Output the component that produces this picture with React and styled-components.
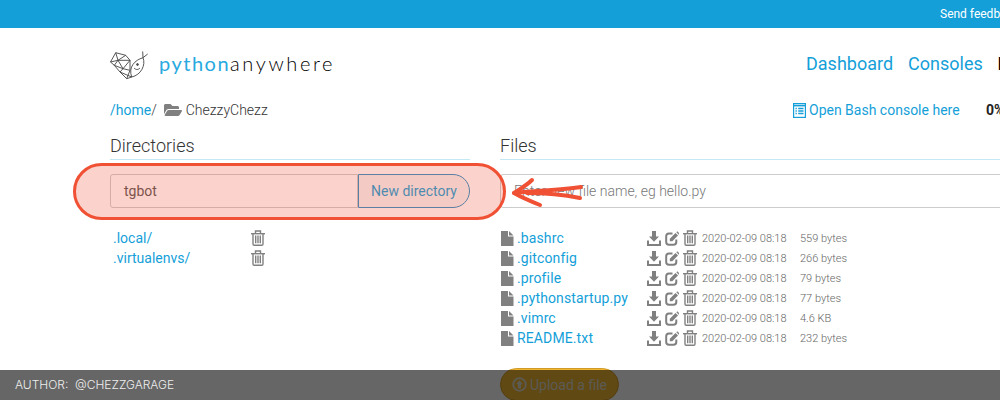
import styled, { createGlobalStyle } from "styled-components";
import { FaFolderOpen } from "react-icons/fa";

const blue = "#149fd9";
const grey = "#808080";

const GlobalStyle = createGlobalStyle`
  html, body {
    margin: 0;
    padding: 0;
    background: #fff;
    overflow: hidden;
  }
  body {
    font-family: Roboto, "Liberation Sans", sans-serif;
    font-weight: 300;
    color: #333;
  }
`;

const Page = styled.div`
  position: relative;
  width: 1000px;
  height: 400px;
  overflow: hidden;
`;

const TopBar = styled.div`
  height: 28px;
  background: ${blue};
  color: #fff;
  font-size: 12px;
  font-weight: 400;
  line-height: 29px;
  padding-left: 940px;
  white-space: nowrap;
`;

const Container = styled.div`
  width: 1300px;
  margin-left: 110px;
`;

const Header = styled.header`
  display: flex;
  align-items: center;
  height: 70px;
`;

const LogoArea = styled.div`
  display: flex;
  align-items: center;
  width: 696px;
  gap: 9px;
  svg {
    margin-top: 6px;
  }
`;

const LogoText = styled.div`
  font-family: Lato, sans-serif;
  font-size: 20px;
  font-weight: 300;
  letter-spacing: 2.6px;
  color: #000;
  span {
    font-weight: 400;
    letter-spacing: 1.5px;
    color: #29a9e0;
  }
`;

const Nav = styled.nav`
  display: flex;
  gap: 15px;
  font-size: 18px;
  font-weight: 400;
  white-space: nowrap;
  a {
    color: ${blue};
  }
  b {
    color: #000;
    font-weight: 700;
  }
`;

const InfoRow = styled.div`
  display: flex;
  align-items: center;
  height: 24px;
  margin-bottom: 12px;
  font-size: 14px;
  white-space: nowrap;
`;

const Crumbs = styled.div`
  display: flex;
  align-items: center;
  width: 683px;
  a {
    color: ${blue};
    font-weight: 400;
  }
  svg {
    color: ${grey};
    font-size: 18px;
    margin: 0 4px 0 7px;
  }
`;

const BashLink = styled.a`
  display: flex;
  align-items: center;
  gap: 3px;
  width: 193px;
  color: ${blue};
  font-weight: 400;
`;

const Percent = styled.b`
  font-weight: 700;
  color: #222;
`;

const Columns = styled.div`
  display: grid;
  grid-template-columns: 360px 1fr;
  column-gap: 30px;
`;

const Heading = styled.h2`
  margin: 0 0 14px;
  padding-bottom: 1px;
  border-bottom: 1px solid #c5e8f5;
  font-size: 18px;
  line-height: 24px;
  font-weight: 300;
  color: #333;
`;

const InputRow = styled.div`
  display: flex;
  height: 34px;
  margin-bottom: 20px;
`;

const TextInput = styled.div`
  flex: 1;
  box-sizing: border-box;
  padding-left: 13px;
  border: 1px solid #ccc;
  border-radius: 3px 0 0 3px;
  font-size: 14px;
  line-height: 32px;
  font-weight: ${(p) => (p.$placeholder ? 300 : 400)};
  color: ${(p) => (p.$placeholder ? "#777" : "#555")};
  white-space: nowrap;
`;

const DirButton = styled.div`
  box-sizing: border-box;
  width: 112px;
  border: 1px solid #2a90c8;
  border-radius: 0 17px 17px 0;
  background: #f5f5f5;
  color: ${blue};
  font-size: 14px;
  font-weight: 400;
  line-height: 32px;
  text-align: center;
`;

const DirRow = styled.div`
  display: grid;
  grid-template-columns: 138px 14px;
  align-items: center;
  height: 20px;
  padding-left: 3px;
  font-size: 14px;
  a {
    color: ${blue};
    font-weight: 400;
  }
`;

const FileRow = styled.div`
  display: grid;
  grid-template-columns: 17px 130px 55px 98px 80px;
  align-items: center;
  height: 20px;
  font-size: 14px;
  white-space: nowrap;
  a {
    color: ${blue};
    font-weight: 400;
    letter-spacing: 0.12px;
  }
  > svg {
    margin-left: 1px;
  }
`;

const Actions = styled.div`
  display: flex;
  align-items: center;
  gap: 4px;
`;

const Meta = styled.span`
  font-size: 11px;
  color: #666;
`;

const UploadButton = styled.div`
  display: flex;
  align-items: center;
  justify-content: center;
  gap: 3px;
  box-sizing: border-box;
  width: 119px;
  height: 33px;
  margin-top: 20px;
  border: 1px solid #d09a28;
  border-radius: 17px;
  background: #f2b632;
  color: #e4e0d0;
  font-size: 14px;
  font-weight: 400;
`;

const Highlight = styled.div`
  position: absolute;
  left: 73px;
  top: 163px;
  box-sizing: border-box;
  width: 433px;
  height: 57px;
  border: 3px solid #f05033;
  border-radius: 29px;
  background: rgba(240, 80, 51, 0.25);
`;

const Arrow = styled.svg`
  position: absolute;
  left: 505px;
  top: 172px;
`;

const AuthorBar = styled.div`
  position: absolute;
  left: 0;
  right: 0;
  bottom: 0;
  height: 30px;
  padding-left: 15px;
  background: rgba(0, 0, 0, 0.6);
  color: #eee;
  font-family: Inter, sans-serif;
  font-size: 12px;
  font-weight: 300;
  line-height: 30px;
`;

const dirs = [".local/", ".virtualenvs/"];

const files = [
  { name: ".bashrc", size: "559 bytes" },
  { name: ".gitconfig", size: "266 bytes" },
  { name: ".profile", size: "79 bytes" },
  { name: ".pythonstartup.py", size: "77 bytes" },
  { name: ".vimrc", size: "4.6 KB" },
  { name: "README.txt", size: "232 bytes" },
];

function Logo() {
  return (
    <svg width="40" height="30" viewBox="0 0 40 30" fill="none" stroke="#444" strokeWidth="0.9" strokeLinejoin="round">
      <path d="M0.5 11 L5.7 1.7 L15.7 4.3 L20 9.3 L8 9.3 L5.7 1.7 M15.7 4.3 L8 9.3 L4.3 14.3 L0.5 11 L8 9.3 M4.3 14.3 L13 17.7 L8 9.3 M13 17.7 L20 9.3 L20 19.3 L13 17.7 L10 21 L4.3 14.3 M10 21 L16.7 27.7 L20 19.3 M10 21 L21.7 26 L16.7 27.7" />
      <path d="M21.7 26 C18 16 25 9 33 6.7 C36 14 31 24 21.7 26 Z M33 6.7 L32.7 0.5 M33 6.7 L37.7 3" />
      <circle cx="27.5" cy="13.5" r="0.9" fill="#444" />
      <path d="M24 17 C26 19 28 19 30 17" />
    </svg>
  );
}

function TrashIcon() {
  return (
    <svg width="14" height="16" viewBox="0 0 14 16" fill="none" stroke={grey} strokeWidth="1.4">
      <path d="M0 3.7H14" />
      <path d="M4.5 3.2V1H9.5V3.2" />
      <path d="M2 4V14Q2 15.3 3.2 15.3H10.8Q12 15.3 12 14V4" />
      <path d="M4.7 5.5V13.3M7 5.5V13.3M9.3 5.5V13.3" />
    </svg>
  );
}

function FileIcon() {
  return (
    <svg width="13" height="15" viewBox="0 0 13 15" fill={grey}>
      <path d="M0 0H7V5.5H12.5V15H0Z" />
      <path d="M8 0L12.5 4.5H8Z" />
    </svg>
  );
}

function DownloadIcon() {
  return (
    <svg width="14" height="15" viewBox="0 0 14 15" fill={grey}>
      <path d="M5 0H9V5.5H12L7 10.8L2 5.5H5Z" />
      <path d="M0 9.5H2V13H12V9.5H14V15H0Z" />
    </svg>
  );
}

function EditIcon() {
  return (
    <svg width="14" height="15" viewBox="0 0 14 15" fill="none" stroke={grey} strokeWidth="2">
      <path d="M7.5 2.5H4Q1.2 2.5 1.2 5.3V11Q1.2 13.8 4 13.8H8.5Q11.3 13.8 11.3 11V8.5" />
      <path d="M4.8 10.3V7.7L10.5 2L13 4.5L7.3 10.3Z" fill={grey} stroke="none" />
      <path d="M11.3 1.2L12.3 0.2L14.8 2.7L13.8 3.7Z" fill={grey} stroke="none" />
    </svg>
  );
}

function ConsoleIcon() {
  return (
    <svg width="13" height="15" viewBox="0 0 13 15" fill="none" stroke={blue}>
      <rect x="0.6" y="0.6" width="11.8" height="13.8" strokeWidth="1.2" />
      <path d="M0.6 2.6H12.4" strokeWidth="1.6" />
      <path d="M2.5 5.5H3.8M5.2 5.5H10.5M2.5 8H3.8M5.2 8H10.5M2.5 10.5H3.8M5.2 10.5H10.5" strokeWidth="1.3" />
    </svg>
  );
}

function UploadIcon() {
  return (
    <svg width="15" height="15" viewBox="0 0 15 15" fill="none" stroke="currentColor">
      <circle cx="7.5" cy="7.5" r="6.3" strokeWidth="1.8" />
      <path d="M7.5 3.2L11 7.2H9V11.5H6V7.2H4Z" fill="currentColor" stroke="none" />
    </svg>
  );
}

function App() {
  return (
    <Page>
      <GlobalStyle />
      <TopBar>Send feedback</TopBar>
      <Container>
        <Header>
          <LogoArea>
            <Logo />
            <LogoText>
              <span>python</span>anywhere
            </LogoText>
          </LogoArea>
          <Nav>
            <a>Dashboard</a>
            <a>Consoles</a>
            <b>Files</b>
          </Nav>
        </Header>
        <InfoRow>
          <Crumbs>
            <a>/home</a>/
            <FaFolderOpen />
            ChezzyChezz
          </Crumbs>
          <BashLink>
            <ConsoleIcon />
            Open Bash console here
          </BashLink>
          <Percent>0%</Percent>
        </InfoRow>
        <Columns>
          <section>
            <Heading>Directories</Heading>
            <InputRow>
              <TextInput>tgbot</TextInput>
              <DirButton>New directory</DirButton>
            </InputRow>
            {dirs.map((dir) => (
              <DirRow key={dir}>
                <a>{dir}</a>
                <TrashIcon />
              </DirRow>
            ))}
          </section>
          <section>
            <Heading>Files</Heading>
            <InputRow>
              <TextInput $placeholder>Enter new file name, eg hello.py</TextInput>
            </InputRow>
            {files.map((file) => (
              <FileRow key={file.name}>
                <FileIcon />
                <a>{file.name}</a>
                <Actions>
                  <DownloadIcon />
                  <EditIcon />
                  <TrashIcon />
                </Actions>
                <Meta>2020-02-09 08:18</Meta>
                <Meta>{file.size}</Meta>
              </FileRow>
            ))}
            <UploadButton>
              <UploadIcon />
              Upload a file
            </UploadButton>
          </section>
        </Columns>
      </Container>
      <Highlight />
      <Arrow width="85" height="40" viewBox="0 0 85 40" fill="none" stroke="#f05033" strokeWidth="4" strokeLinecap="round" strokeLinejoin="round">
        <path d="M27 8 C22 13 15 17 9 21 C16 25 25 29 35 33" />
        <path d="M9 21 C30 19 55 18 76 15" />
        <path d="M22 21 C40 21 60 23 75 26" />
      </Arrow>
      <AuthorBar>AUTHOR:&nbsp; @CHEZZGARAGE</AuthorBar>
    </Page>
  );
}

export default App;
